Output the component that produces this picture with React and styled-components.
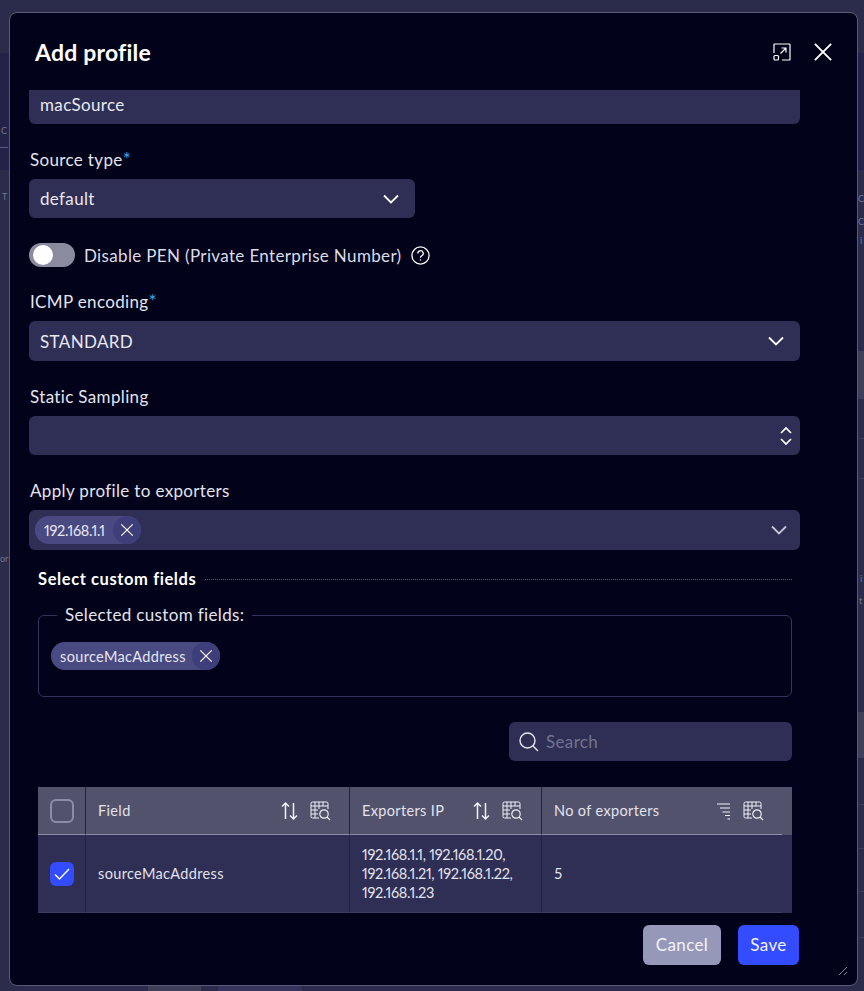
import React from "react";
import styled, { createGlobalStyle } from "styled-components";

const GlobalStyle = createGlobalStyle`
  html, body {
    margin: 0;
    height: 100%;
    background: #2b2b4b;
    overflow: hidden;
    font-family: "Lato", "Liberation Sans", sans-serif;
    letter-spacing: 0.35px;
  }
  * {
    box-sizing: border-box;
  }
`;

const Backdrop = styled.div`
  position: relative;
  width: 864px;
  height: 991px;
  padding: 12px 6px 5px 9px;
  background: #2b2b4b;
  overflow: hidden;
`;

const PageBand = styled.div`
  position: absolute;
  left: ${(p) => p.$left || 0}px;
  right: ${(p) => p.$right || 0}px;
  top: ${(p) => p.$top}px;
  height: ${(p) => p.$height}px;
  background: ${(p) => p.$color};
  border-radius: ${(p) => p.$radius || "0"};
`;

const PageText = styled.span`
  position: absolute;
  left: ${(p) => p.$left}px;
  top: ${(p) => p.$top}px;
  font-size: 9px;
  line-height: 10px;
  letter-spacing: 0;
  color: #74748c;
`;

const Modal = styled.div`
  position: relative;
  display: flex;
  flex-direction: column;
  height: 100%;
  background: #02021a;
  border: 1px solid #5a5a78;
  border-radius: 8px;
  padding-left: 19px;
`;

const Header = styled.div`
  display: flex;
  align-items: center;
  justify-content: space-between;
  flex: 0 0 77px;
  padding: 0 24px 0 6px;
`;

const Title = styled.h2`
  margin: 0;
  font-size: 23px;
  font-weight: 700;
  letter-spacing: 0.2px;
  color: #fff;
`;

const HeaderIcons = styled.div`
  display: flex;
  align-items: center;
  gap: 22px;
`;

const IconButton = styled.span`
  display: flex;
  color: #fff;
`;

const Body = styled.div`
  flex: 0 0 823px;
  width: 771px;
  overflow: hidden;
`;

const Label = styled.div`
  height: 24px;
  line-height: 24px;
  font-size: 17px;
  color: #e4e4ee;
  margin: ${(p) => p.$top}px 0 7px 1px;
`;

const Star = styled.span`
  font-size: 19px;
  line-height: 0;
  color: #38a6e2;
`;

const Field = styled.div`
  display: flex;
  align-items: center;
  justify-content: space-between;
  width: ${(p) => p.$width || "100%"};
  height: ${(p) => p.$height}px;
  padding: 0 ${(p) => p.$right || 15}px ${(p) => (p.$clipped ? 5 : 0)}px 11px;
  background: #2f2f55;
  border-radius: ${(p) => (p.$clipped ? "0 0 6px 6px" : "6px")};
  font-size: 17px;
  color: #e8e8f0;
`;

const ChipField = styled(Field)`
  padding-left: 6px;
  padding-right: 12px;
`;

const Chip = styled.span`
  display: inline-flex;
  align-items: center;
  height: 28px;
  padding-left: 9px;
  background: #4a4a82;
  border-radius: 14px;
  font-size: 14.5px;
  color: #e6e6f2;
`;

const IpText = styled.span`
  font-variant-numeric: proportional-nums;
  letter-spacing: -0.3px;
`;

const ChipClose = styled.span`
  display: flex;
  align-items: center;
  justify-content: center;
  width: 28px;
  height: 28px;
  margin-left: ${(p) => p.$gap}px;
  background: #3e3e7a;
  border-radius: 50%;
  color: #fff;
`;

const ToggleRow = styled.div`
  display: flex;
  align-items: center;
  height: 24px;
  margin-top: 25px;
  font-size: 17px;
  color: #dcdce8;
`;

const Toggle = styled.span`
  display: flex;
  align-items: center;
  width: 46px;
  height: 24px;
  padding-left: 4px;
  margin-right: 9px;
  background: #8b8b9f;
  border-radius: 12px;
`;

const Knob = styled.span`
  width: 20px;
  height: 20px;
  background: #fff;
  border-radius: 50%;
`;

const HelpIcon = styled.span`
  display: flex;
  margin-left: 9px;
  color: #fff;
`;

const Section = styled.div`
  padding: 0 8px 0 9px;
`;

const SectionHead = styled.div`
  display: flex;
  align-items: center;
  height: 20px;
  margin-top: 19px;
  gap: 9px;
  font-size: 16.5px;
  font-weight: 700;
  letter-spacing: 0.6px;
  color: #fff;
`;

const Dots = styled.span`
  flex: 1;
  border-top: 1px dotted #5c5c7a;
`;

const Fieldset = styled.fieldset`
  height: 92px;
  margin: 16px 0 0;
  padding: 17px 12px 0;
  border: 1px solid #35355c;
  border-radius: 6px;
  min-inline-size: 0;
`;

const Legend = styled.legend`
  margin-left: 6px;
  padding: 0 8px;
  font-size: 17px;
  line-height: 20px;
  color: #e4e4ee;
`;

const SearchRow = styled.div`
  display: flex;
  justify-content: flex-end;
  margin-top: 25px;
`;

const SearchBox = styled.div`
  display: flex;
  align-items: center;
  width: 283px;
  height: 39px;
  padding-left: 9px;
  gap: 7px;
  background: #2f2f55;
  border-radius: 6px;
  font-size: 17px;
  color: #73738f;
`;

const Table = styled.div`
  margin-top: 26px;
  background: #2f2f55;
`;

const Row = styled.div`
  display: grid;
  grid-template-columns: 48px 264px 192px 240px;
  background: ${(p) => (p.$head ? "#52526c" : "#2f2f55")};
  height: ${(p) => (p.$head ? 48 : 78)}px;
`;

const Cell = styled.div`
  display: flex;
  align-items: center;
  justify-content: ${(p) => (p.$between ? "space-between" : "flex-start")};
  padding: 0 ${(p) => p.$right || 0}px 0 12px;
  border-right: ${(p) => (p.$last ? "none" : "1px solid #22223f")};
  border-bottom: 1px solid ${(p) => (p.$head ? "#8e8ea6" : "#3d3d62")};
  font-size: 14.5px;
  line-height: 19px;
  color: #e2e2ec;
`;

const CheckCell = styled(Cell)`
  justify-content: center;
  padding: 0;
`;

const CheckBox = styled.span`
  display: flex;
  align-items: center;
  justify-content: center;
  width: 24px;
  height: 24px;
  border-radius: 6px;
  border: ${(p) => (p.$on ? "none" : "2px solid #8c8ca6")};
  background: ${(p) => (p.$on ? "#334cff" : "transparent")};
  color: #fff;
`;

const HeadIcons = styled.span`
  display: flex;
  align-items: center;
  gap: 12px;
  color: #f0f0f6;
`;

const Footer = styled.div`
  display: flex;
  justify-content: flex-end;
  gap: 17px;
  width: 770px;
  margin-top: 12px;
`;

const Button = styled.button`
  height: 40px;
  width: ${(p) => p.$width}px;
  padding: 0 0 2px;
  border: none;
  border-radius: 6px;
  background: ${(p) => p.$color};
  color: #f2f2f8;
  font-family: inherit;
  font-size: 17px;
  letter-spacing: 0.35px;
`;

const Grip = styled.span`
  position: absolute;
  right: 9px;
  bottom: 9px;
  display: flex;
  color: #8a8a9e;
`;

const Chevron = ({ color = "#fff" }) => (
  <svg width="18" height="18" viewBox="0 0 18 18" fill="none" stroke={color} strokeWidth="1.8">
    <path d="M2 5.500 9 12.500l7-7" />
  </svg>
);

const Cross = ({ size = 16, width = 1.4 }) => (
  <svg width={size} height={size} viewBox="0 0 16 16" fill="none" stroke="currentColor" strokeWidth={width}>
    <path d="M1.500 1.500l13 13M14.500 1.500l-13 13" />
  </svg>
);

const Sort = () => (
  <svg width="17" height="20" viewBox="0 0 17 20" fill="none" stroke="currentColor" strokeWidth="1.5">
    <path d="M4.500 18V2M1 5.500 4.500 2 8 5.500M12.500 2v16M9 14.500l3.500 3.500 3.500-3.500" />
  </svg>
);

const SortDesc = () => (
  <svg width="14" height="18" viewBox="0 0 14 18" fill="none" stroke="currentColor" strokeWidth="1.2">
    <path d="M0 2h13M3 6h10M5.500 10H13M8 13.500h5M10.500 17H13" />
  </svg>
);

const ColumnSearch = () => (
  <svg width="21" height="20" viewBox="0 0 21 20" fill="none" stroke="currentColor" strokeWidth="1">
    <path d="M9 17H2.500A1.500 1.500 0 0 1 1 15.500v-13A1.500 1.500 0 0 1 2.500 1h14A1.500 1.500 0 0 1 18 2.500V8" />
    <path d="M1 5h17M5 1v16M9 1v7M13 1v4M1 9h7M1 13h7" />
    <circle cx="14" cy="13" r="4.200" strokeWidth="1.200" />
    <path d="M17 16l3 3" strokeWidth="1.200" />
  </svg>
);

const App = () => (
  <>
    <GlobalStyle />
    <Backdrop>
      <PageBand $top={53} $height={117} $color="#23234a" />
      <PageBand $left={0} $right={856} $top={147} $height={1} $color="#5c5c78" />
      <PageBand $left={400} $top={351} $height={48} $color="#3f3f5c" />
      <PageBand $left={400} $top={438} $height={1} $color="#3a3a5a" />
      <PageBand $left={400} $top={478} $height={1} $color="#3a3a5a" />
      <PageBand $left={400} $top={712} $height={46} $color="#3f3f5c" />
      <PageBand $left={400} $top={804} $height={1} $color="#3a3a5a" />
      <PageBand $left={400} $top={848} $height={1} $color="#3a3a5a" />
      <PageBand $left={400} $top={891} $height={1} $color="#3a3a5a" />
      <PageBand $left={400} $top={937} $height={1} $color="#3a3a5a" />
      <PageBand $left={148} $right={663} $top={980} $height={11} $color="#3e3e58" />
      <PageBand $left={218} $right={562} $top={980} $height={20} $radius="30px" $color="#35355e" />
      <PageText $left={1} $top={126}>C</PageText>
      <PageText $left={2} $top={192}>T</PageText>
      <PageText $left={0} $top={554}>or</PageText>
      <PageText $left={858} $top={194}>C</PageText>
      <PageText $left={858} $top={217}>C</PageText>
      <PageText $left={860} $top={236}>i</PageText>
      <PageText $left={860} $top={574}>i</PageText>
      <PageText $left={859} $top={596}>t</PageText>
      <Modal>
        <Header>
          <Title>Add profile</Title>
          <HeaderIcons>
            <IconButton>
              <svg width="18" height="18" viewBox="0 0 18 18" fill="none" stroke="currentColor" strokeWidth="1.2">
                <path d="M1 10V1.500A.5.5 0 0 1 1.500 1h15a.5.5 0 0 1 .5.5v15a.5.5 0 0 1-.5.5H9" />
                <rect x="1" y="12.500" width="4.500" height="4.500" rx="1" />
                <path d="M7.500 10.500 13 5M8.500 5H13v4.500" />
              </svg>
            </IconButton>
            <IconButton>
              <Cross size={20} width={1.5} />
            </IconButton>
          </HeaderIcons>
        </Header>
        <Body>
          <Field $height={34} $clipped>macSource</Field>
          <Label $top={24}>Source type<Star>*</Star></Label>
          <Field $height={39} $width="386px"><span>default</span><Chevron /></Field>
          <ToggleRow>
            <Toggle><Knob /></Toggle>
            Disable PEN (Private Enterprise Number)
            <HelpIcon>
              <svg width="19" height="19" viewBox="0 0 19 19" fill="none" stroke="currentColor" strokeWidth="1.3">
                <circle cx="9.500" cy="9.500" r="8.600" />
                <path d="M6.800 7.400a2.700 2.700 0 1 1 4 2.400c-.9.5-1.300 1-1.300 2" />
                <path d="M9.500 13.400v1.200" />
              </svg>
            </HelpIcon>
          </ToggleRow>
          <Label $top={23}>ICMP encoding<Star>*</Star></Label>
          <Field $height={40}><span>STANDARD</span><Chevron /></Field>
          <Label $top={24}>Static Sampling</Label>
          <Field $height={39} $right={8}>
            <span />
            <svg width="12" height="20" viewBox="0 0 12 20" fill="none" stroke="#fff" strokeWidth="1.700">
              <path d="M1 7 6 2l5 5M1 13l5 5 5-5" />
            </svg>
          </Field>
          <Label $top={24}>Apply profile to exporters</Label>
          <ChipField $height={40}>
            <Chip><IpText>192.168.1.1</IpText><ChipClose $gap={8}><Cross size={14} /></ChipClose></Chip>
            <Chevron color="#c6c6d4" />
          </ChipField>
          <Section>
            <SectionHead>Select custom fields<Dots /></SectionHead>
            <Fieldset>
              <Legend>Selected custom fields:</Legend>
              <Chip>sourceMacAddress<ChipClose $gap={6}><Cross size={14} /></ChipClose></Chip>
            </Fieldset>
            <SearchRow>
              <SearchBox>
                <svg width="21" height="21" viewBox="0 0 21 21" fill="none" stroke="#e6e6f0" strokeWidth="1.400">
                  <circle cx="9.500" cy="9.500" r="7.500" />
                  <path d="M15 15l5 5" />
                </svg>
                Search
              </SearchBox>
            </SearchRow>
            <Table>
              <Row $head>
                <CheckCell $head><CheckBox /></CheckCell>
                <Cell $head $between $right={18}>
                  Field
                  <HeadIcons><Sort /><ColumnSearch /></HeadIcons>
                </Cell>
                <Cell $head $between $right={18}>
                  Exporters IP
                  <HeadIcons><Sort /><ColumnSearch /></HeadIcons>
                </Cell>
                <Cell $head $last $between $right={18}>
                  No of exporters
                  <HeadIcons><SortDesc /><ColumnSearch /></HeadIcons>
                </Cell>
              </Row>
              <Row>
                <CheckCell>
                  <CheckBox $on>
                    <svg width="16" height="14" viewBox="0 0 16 14" fill="none" stroke="currentColor" strokeWidth="1.400">
                      <path d="M1 7.500 5.500 12 15 2" />
                    </svg>
                  </CheckBox>
                </CheckCell>
                <Cell>sourceMacAddress</Cell>
                <Cell>
                  <IpText>192.168.1.1, 192.168.1.20, 192.168.1.21, 192.168.1.22, 192.168.1.23</IpText>
                </Cell>
                <Cell $last>5</Cell>
              </Row>
            </Table>
          </Section>
        </Body>
        <Footer>
          <Button $width={78} $color="#9598b8">Cancel</Button>
          <Button $width={61} $color="#334cff">Save</Button>
        </Footer>
        <Grip>
          <svg width="10" height="10" viewBox="0 0 10 10" fill="none" stroke="currentColor" strokeWidth="1">
            <path d="M1 9l8-8M6 9l3-3" />
          </svg>
        </Grip>
      </Modal>
    </Backdrop>
  </>
);

export default App;
